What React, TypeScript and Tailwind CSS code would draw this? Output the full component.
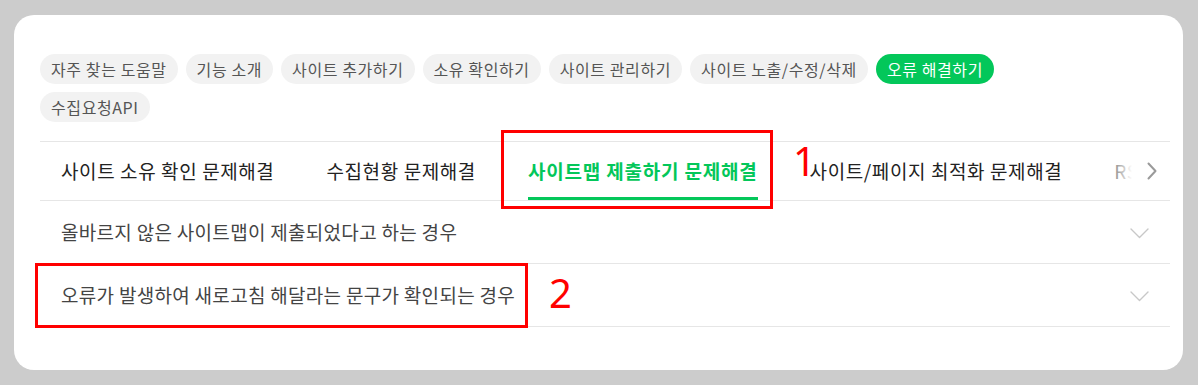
const pills = [
  "자주 찾는 도움말",
  "기능 소개",
  "사이트 추가하기",
  "소유 확인하기",
  "사이트 관리하기",
  "사이트 노출/수정/삭제",
  "오류 해결하기",
  "수집요청API",
];

const tabs = [
  "사이트 소유 확인 문제해결",
  "수집현황 문제해결",
  "사이트맵 제출하기 문제해결",
  "사이트/페이지 최적화 문제해결",
  "RSS 제출하기 문제해결",
];

const questions = [
  "올바르지 않은 사이트맵이 제출되었다고 하는 경우",
  "오류가 발생하여 새로고침 해달라는 문구가 확인되는 경우",
];

export default function App() {
  return (
    <main
      className="relative h-[385px] w-full overflow-hidden bg-[#cccccc] pl-[14px] pt-[15px]"
      style={{ fontFamily: '"Noto Sans CJK KR", "Noto Sans", sans-serif' }}
    >
      <section className="h-[355px] w-[1169px] rounded-[20px] bg-white pl-[26px] pr-[13px] pt-[39px]">
        {/* 카테고리 */}
        <div className="flex w-[1050px] flex-wrap gap-[8px]">
          {pills.map((pill) => (
            <span
              key={pill}
              className={
                pill === "오류 해결하기"
                  ? "flex h-[30px] items-center rounded-full bg-[#03c75a] px-[11px] text-[16px] tracking-[0.6px] text-white"
                  : "flex h-[30px] items-center rounded-full bg-[#f2f2f2] px-[11px] text-[16px] tracking-[0.6px] text-[#555555]"
              }
            >
              {pill}
            </span>
          ))}
        </div>

        {/* 탭 */}
        <div className="relative mt-[19px] h-[60px] border-y border-[#e6e6e6]">
          <div className="flex h-full gap-[52px] overflow-hidden pl-[21px]">
            {tabs.map((tab) =>
              tab === "사이트맵 제출하기 문제해결" ? (
                <div
                  key={tab}
                  className="relative flex shrink-0 items-center whitespace-nowrap text-[19px] font-bold tracking-[0.8px] text-[#03c75a]"
                >
                  {tab}
                  <span className="absolute bottom-0 left-0 right-0 h-[3px] bg-[#03c75a]" />
                </div>
              ) : (
                <div
                  key={tab}
                  className="flex shrink-0 items-center whitespace-nowrap text-[19px] tracking-[0.6px] text-[#222222]"
                >
                  {tab}
                </div>
              )
            )}
          </div>
          <div className="absolute right-0 top-0 flex h-full w-[62px]">
            <div className="h-full w-[24px] bg-gradient-to-r from-white/30 to-white" />
            <div className="flex h-full flex-1 items-center justify-end bg-white pr-[13px]">
              <svg width="10" height="18" viewBox="0 0 10 18" fill="none">
                <polyline
                  points="1.5,1.5 8.5,9 1.5,16.5"
                  stroke="#9a9a9a"
                  strokeWidth="2"
                  strokeLinecap="round"
                  strokeLinejoin="round"
                />
              </svg>
            </div>
          </div>
        </div>

        {/* 질문 목록 */}
        {questions.map((q) => (
          <div
            key={q}
            className="flex h-[63px] items-center justify-between border-b border-[#e6e6e6] pl-[21px] pr-[21px]"
          >
            <span className="text-[19px] tracking-[0.3px] text-[#444444]">{q}</span>
            <svg width="19" height="11" viewBox="0 0 19 11" fill="none" className="mt-[3px]">
              <polyline
                points="1,1 9.5,9.5 18,1"
                stroke="#c8c8c8"
                strokeWidth="1.4"
                strokeLinecap="round"
                strokeLinejoin="round"
              />
            </svg>
          </div>
        ))}
      </section>

      {/* 표시 */}
      <div className="absolute left-[501px] top-[130px] h-[79px] w-[272px] border-[3px] border-[#ff0000]" />
      <div
        className="absolute left-[793px] top-[141px] text-[40px] leading-none text-[#ff0000]"
        style={{ fontFamily: '"Noto Sans", sans-serif' }}
      >
        1
      </div>
      <div className="absolute left-[35px] top-[263px] h-[65px] w-[493px] border-[3px] border-[#ff0000]" />
      <div
        className="absolute left-[549px] top-[273px] text-[40px] leading-none text-[#ff0000]"
        style={{ fontFamily: '"Noto Sans", sans-serif' }}
      >
        2
      </div>
    </main>
  );
}
